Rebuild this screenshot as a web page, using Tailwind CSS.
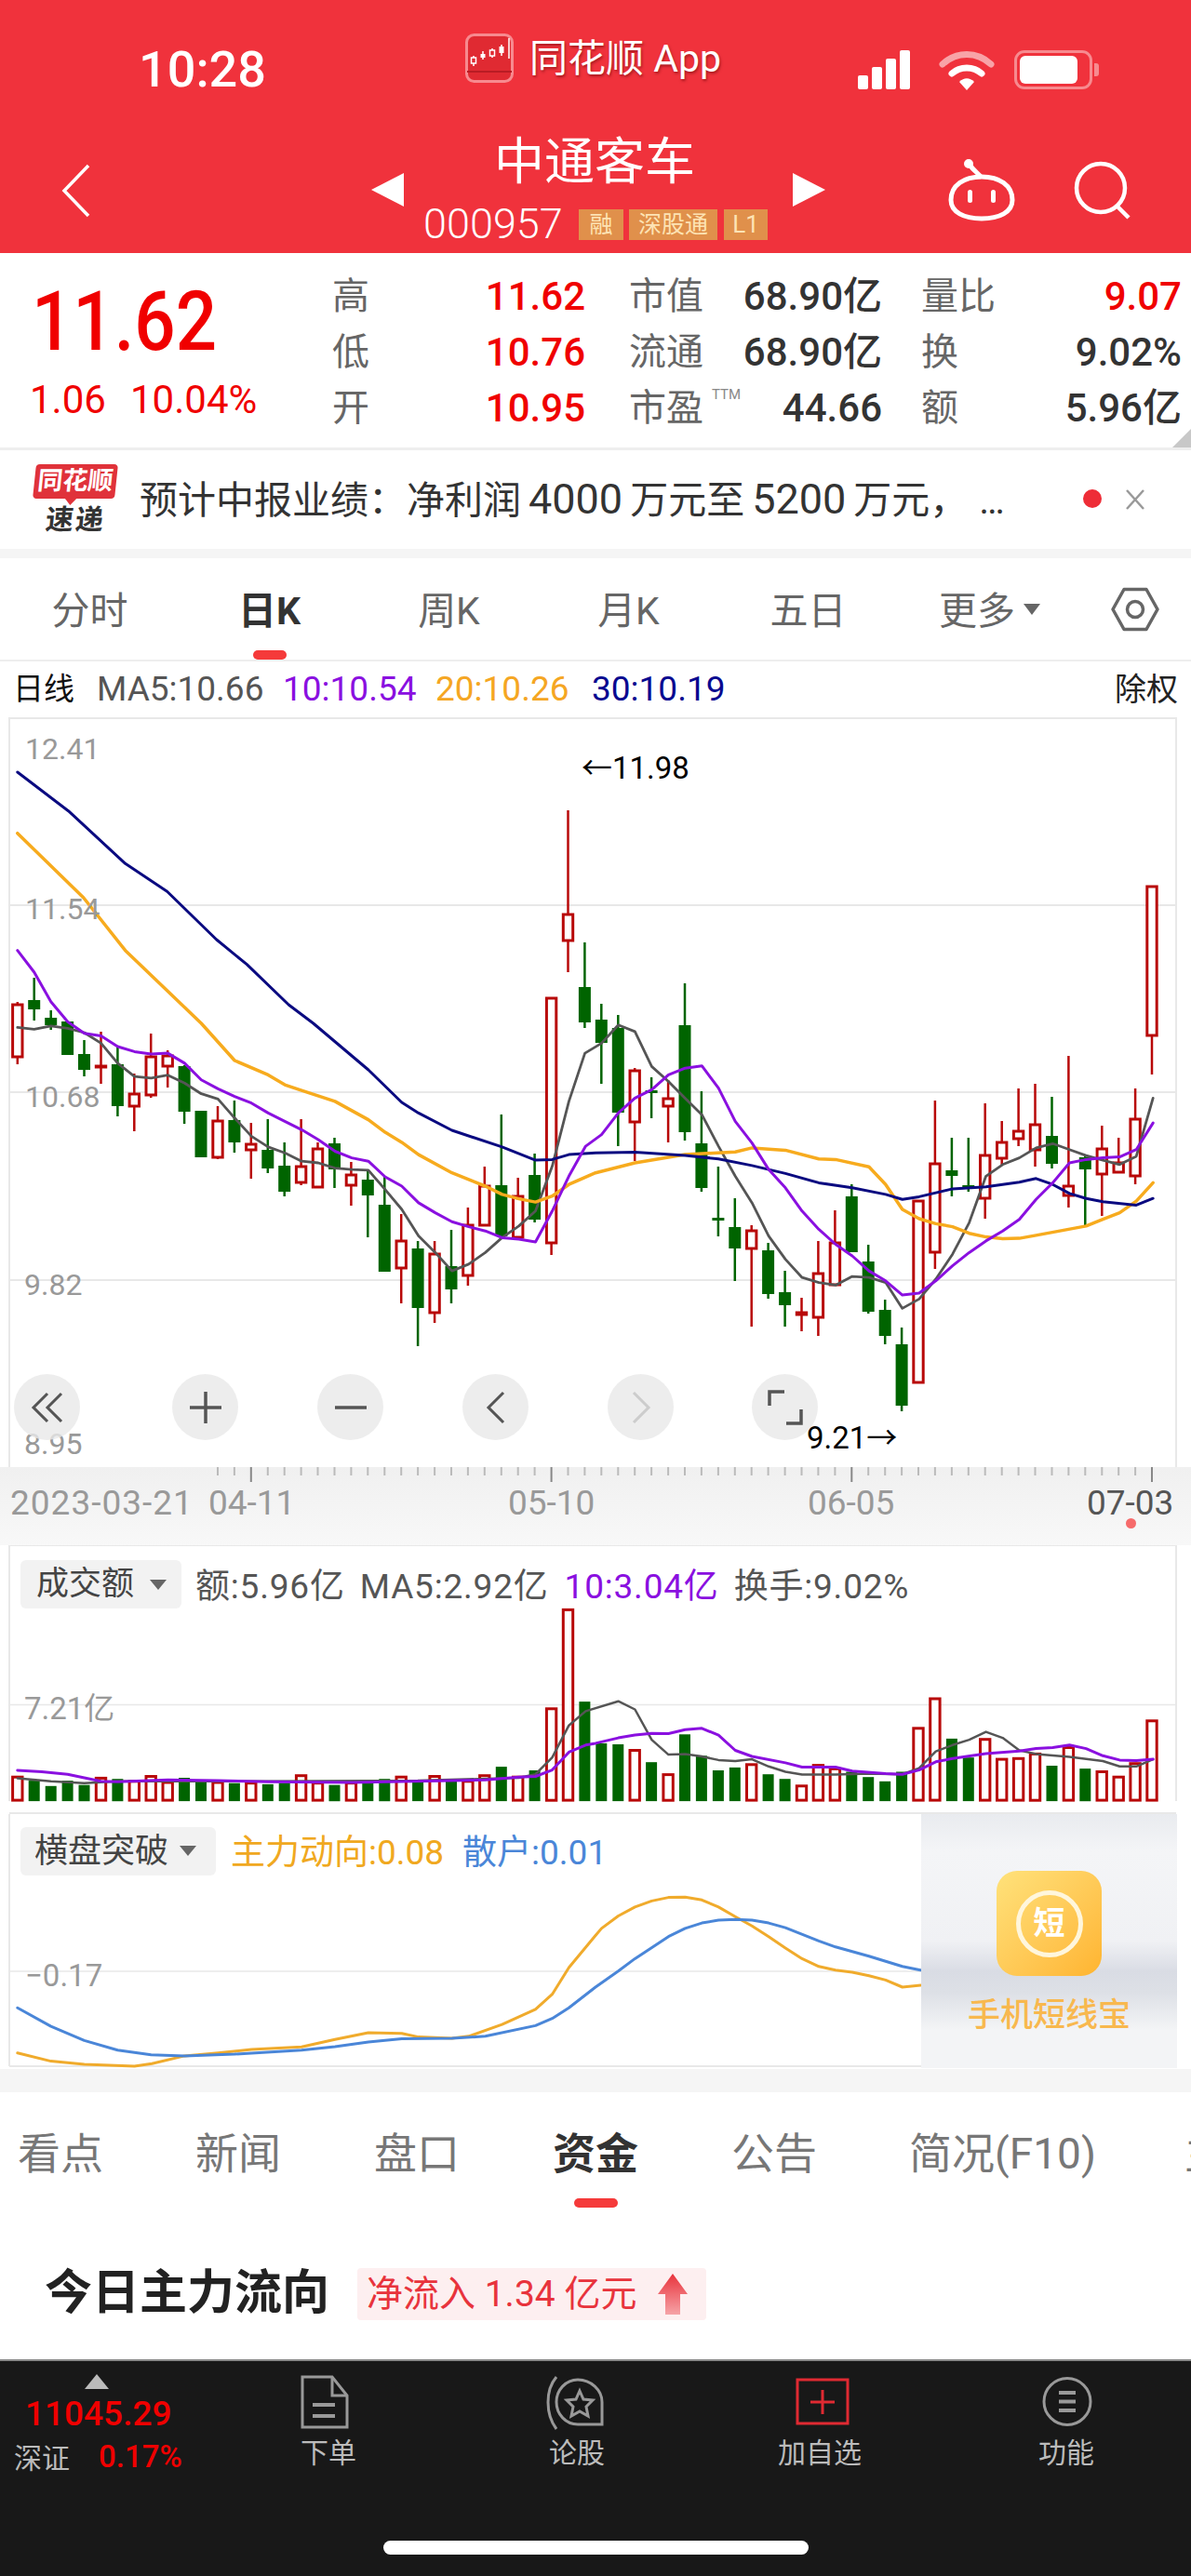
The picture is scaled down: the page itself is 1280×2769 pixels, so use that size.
<!DOCTYPE html>
<html lang="zh-CN">
<head>
    <meta charset="UTF-8">
    <meta name="viewport" content="width=device-width, initial-scale=1.0">
    <title>中通客车 000957</title>
    <script src="https://cdn.jsdelivr.net/npm/@tailwindcss/browser@4"></script>
</head>
<body class="w-[1280px] h-[2769px] overflow-hidden bg-white font-[Roboto,'Noto_Sans_CJK_SC',sans-serif] text-[#333]">
    <!-- Red header -->
    <header class="h-[272px] bg-[#f0323c] text-white relative">
        <div class="h-[130px] flex items-center relative">
            <span class="absolute left-[149px] top-[46px] text-[54px] leading-[58px] font-medium">10:28</span>
            <div class="absolute left-[500px] top-[36px] flex items-center gap-[17px]">
                <svg width="52" height="53" viewBox="0 0 52 53">
                    <rect x="1.5" y="1.5" width="49" height="50" rx="8" fill="#e02a32" stroke="#f78a8f" stroke-width="3"/>
                    <path d="M9 24v11M19 19v9M29 16v10M39 12v12M47 5v22" stroke="#fff" stroke-width="1.5"/>
                    <rect x="6.500" y="26" width="5" height="6" fill="#e02a32" stroke="#fff" stroke-width="1.5"/>
                    <rect x="16.500" y="22" width="5" height="4" fill="#fff"/>
                    <rect x="26.500" y="18" width="5" height="6" fill="#e02a32" stroke="#fff" stroke-width="1.5"/>
                    <rect x="36.500" y="14" width="5" height="7" fill="#fff"/>
                    <rect x="2" y="40" width="48" height="2" fill="#b91c24"/>
                </svg>
                <span class="text-[41px] leading-[50px] [text-shadow:1px_2px_3px_rgba(90,0,0,0.5)]">同花顺 App</span>
            </div>
            <div class="absolute left-[922px] top-[54px] flex items-end gap-[4px] h-[42px]">
                <i class="block w-[11px] h-[15px] rounded-[2px] bg-white"></i>
                <i class="block w-[11px] h-[24px] rounded-[2px] bg-white"></i>
                <i class="block w-[11px] h-[33px] rounded-[2px] bg-white"></i>
                <i class="block w-[11px] h-[42px] rounded-[2px] bg-white"></i>
            </div>
            <svg class="absolute left-[1008px] top-[54px]" width="62" height="44" viewBox="0 0 62 44" fill="none">
                <path d="M5 15C20 1 42 1 57 15" stroke="#f8a3a7" stroke-width="7" stroke-linecap="round"/>
                <path d="M15 25C24 17 38 17 47 25" stroke="#fff" stroke-width="7" stroke-linecap="round"/>
                <path d="M23 34C28 29 34 29 39 34L31 43Z" fill="#fff"/>
            </svg>
            <div class="absolute left-[1090px] top-[54px] flex items-center">
                <div class="w-[84px] h-[42px] rounded-[11px] border-[3px] border-[#f78a8f] p-[3px]">
                    <div class="w-[62px] h-full rounded-[6px] bg-white"></div>
                </div>
                <i class="block w-[5px] h-[14px] rounded-r-[3px] bg-[#f78a8f] ml-[2px]"></i>
            </div>
        </div>
        <div class="flex flex-col items-center">
            <h1 class="text-[54px] leading-[66px] mt-[12px] -ml-[2px]">中通客车</h1>
            <div class="flex items-center mt-[16px] h-[34px]">
                <span class="text-[45px] leading-[34px] font-light w-[167px]">000957</span>
                <span class="w-[48px] h-[33px] bg-[#e0904b] text-[#fde3b4] text-[25px] leading-[33px] text-center">融</span>
                <span class="w-[95px] h-[33px] bg-[#e0904b] text-[#fde3b4] text-[25px] leading-[33px] text-center ml-[6px]">深股通</span>
                <span class="w-[47px] h-[33px] bg-[#e0904b] text-[#fde3b4] text-[26px] leading-[33px] text-center ml-[7px]">L1</span>
            </div>
        </div>
        <svg class="absolute left-[64px] top-[175px]" width="36" height="60" viewBox="0 0 36 60" fill="none">
            <path d="M31 3L5 30L31 57" stroke="#fff" stroke-width="3.500"/>
        </svg>
        <i class="absolute left-[399px] top-[186px] w-0 h-0 border-y-[18px] border-y-transparent border-r-[35px] border-r-white"></i>
        <i class="absolute left-[852px] top-[186px] w-0 h-0 border-y-[18px] border-y-transparent border-l-[35px] border-l-white"></i>
        <svg class="absolute left-[1018px] top-[170px]" width="74" height="68" viewBox="0 0 74 68" fill="none" stroke="#fff" stroke-width="5">
            <path d="M37 21C33 16 28 13 24 7"/>
            <circle cx="23" cy="6" r="2.500" fill="#fff"/>
            <path d="M4 45C4 29 18 20 37 20C56 20 70 29 70 45C70 58 56 65 37 65C18 65 4 58 4 45Z"/>
            <rect x="22" y="34" width="5" height="14" rx="2.500" fill="#fff" stroke="none"/>
            <rect x="47" y="34" width="5" height="14" rx="2.500" fill="#fff" stroke="none"/>
        </svg>
        <svg class="absolute left-[1153px] top-[173px]" width="66" height="64" viewBox="0 0 66 64" fill="none" stroke="#fff" stroke-width="4.500">
            <circle cx="30" cy="29" r="26"/>
            <path d="M47 48L60 61"/>
        </svg>
    </header>

    <!-- Quote -->
    <section class="h-[212px] border-b-[3px] border-[#eeeeee] flex relative">
        <div class="w-[357px] pl-[34px]">
            <div class="text-[78px] leading-[80px] font-medium text-[#f00000] mt-[34px] scale-y-[1.15] origin-center">11.62</div>
            <div class="flex text-[42px] leading-[44px] text-[#f00000] mt-[22px] -ml-[2px]">
                <span class="w-[108px]">1.06</span><span>10.04%</span>
            </div>
        </div>
        <div class="grid grid-cols-[272px_272px_275px] gap-x-[47px] grid-rows-[60px_60px_60px] pt-[17px] text-[40px] leading-[60px] text-[#666] [&>*]:flex [&>*]:justify-between">
            <div><span>高</span><b class="font-medium text-[42px] text-[#f00000]">11.62</b></div>
            <div><span>市值</span><b class="font-medium text-[42px] text-[#333]">68.90亿</b></div>
            <div class="-ml-[5px]"><span>量比</span><b class="font-medium text-[42px] text-[#f00000]">9.07</b></div>
            <div><span>低</span><b class="font-medium text-[42px] text-[#f00000]">10.76</b></div>
            <div><span>流通</span><b class="font-medium text-[42px] text-[#333]">68.90亿</b></div>
            <div class="-ml-[5px]"><span>换</span><b class="font-medium text-[42px] text-[#333]">9.02%</b></div>
            <div><span>开</span><b class="font-medium text-[42px] text-[#f00000]">10.95</b></div>
            <div>
                <span class="flex">市盈<sup class="text-[15px] leading-none mt-[8px] ml-[9px] top-0 text-[#888]">TTM</sup></span>
                <b class="font-medium text-[42px] text-[#333]">44.66</b>
            </div>
            <div class="-ml-[5px]"><span>额</span><b class="font-medium text-[42px] text-[#333]">5.96亿</b></div>
        </div>
        <i class="absolute right-0 bottom-0 w-0 h-0 border-b-[20px] border-b-[#c8c8c8] border-l-[20px] border-l-transparent"></i>
    </section>

    <!-- News ticker -->
    <section class="h-[106px] flex items-center relative">
        <div class="absolute left-[37px] top-[15px] w-[88px]">
            <div class="relative h-[37px] rounded-[4px] bg-[#e0323a] text-white text-[27px] leading-[37px] font-bold -skew-x-6 text-center whitespace-nowrap">同花顺
                <i class="absolute left-[34px] -bottom-[7px] w-0 h-0 border-x-[7px] border-x-transparent border-t-[8px] border-t-[#e0323a]"></i>
            </div>
            <div class="text-[30px] leading-[32px] tracking-[2px] font-bold -skew-x-6 text-[#333] text-center mt-[7px]">速递</div>
        </div>
        <p class="ml-[150px] text-[41px] leading-[50px] text-[#333] whitespace-nowrap">预计中报业绩：净利润<span class="text-[45px] mx-[8px]">4000</span>万元至<span class="text-[45px] mx-[8px]">5200</span>万元，<span class="ml-[12px] tracking-[3px]">…</span></p>
        <i class="absolute left-[1164px] top-[42px] w-[20px] h-[20px] rounded-full bg-[#ee2d37]"></i>
        <svg class="absolute left-[1209px] top-[41px]" width="22" height="24" viewBox="0 0 22 24" fill="none" stroke="#999" stroke-width="2.500">
            <path d="M2 2L20 22M20 2L2 22"/>
        </svg>
    </section>
    <div class="h-[10px] bg-[#f5f5f5]"></div>

    <!-- Period tabs -->
    <nav class="h-[111px] border-b-[2px] border-[#eeeeee] flex items-start text-[41px] leading-[56px] text-[#666] relative">
        <span class="w-[193px] text-center pt-[29px]">分时</span>
        <span class="w-[193px] text-center pt-[29px] font-bold text-[#333]">日K</span>
        <span class="w-[193px] text-center pt-[29px]">周K</span>
        <span class="w-[193px] text-center pt-[29px]">月K</span>
        <span class="w-[193px] text-center pt-[29px]">五日</span>
        <span class="ml-[44px] pt-[29px] flex items-center">更多<i class="block w-0 h-0 ml-[9px] mt-[-4px] border-x-[9px] border-x-transparent border-t-[12px] border-t-[#666]"></i></span>
        <svg class="ml-[75px] mt-[31px]" width="54" height="48" viewBox="0 0 54 48" fill="none" stroke="#666" stroke-width="3.500">
            <path d="M15 2.500H39L51 24L39 45.500H15L3 24Z" stroke-linejoin="round"/>
            <circle cx="27" cy="24" r="8.500"/>
        </svg>
        <i class="absolute left-[272px] top-[99px] w-[36px] h-[10px] rounded-[5px] bg-[#f53a3a]"></i>
    </nav>

    <!-- MA legend -->
    <div class="h-[60px] relative text-[37px] leading-[60px] whitespace-nowrap">
        <span class="absolute left-[14px] text-[33px] text-[#111]">日线</span>
        <span class="absolute left-[104px] text-[#555]">MA5:10.66</span>
        <span class="absolute left-[304px] text-[#8a10e0]">10:10.54</span>
        <span class="absolute left-[468px] text-[#f5a623]">20:10.26</span>
        <span class="absolute left-[636px] text-[#0a0a90]">30:10.19</span>
        <span class="absolute left-[1198px] text-[34px] text-[#222]">除权</span>
    </div>

    <!-- K line chart -->
    <section class="relative h-[806px]">
        <svg id="kline" class="block" width="1280" height="806" viewBox="0 771 1280 806"></svg>
        <span class="absolute left-[27px] top-[16px] text-[32px] leading-[36px] text-[#999]">12.41</span>
        <span class="absolute left-[27px] top-[188px] text-[32px] leading-[36px] text-[#999]">11.54</span>
        <span class="absolute left-[27px] top-[390px] text-[32px] leading-[36px] text-[#999]">10.68</span>
        <span class="absolute left-[26px] top-[592px] text-[32px] leading-[36px] text-[#999]">9.82</span>
        <span class="absolute left-[26px] top-[763px] text-[32px] leading-[36px] text-[#999]">8.95</span>
        <span class="absolute left-[625px] top-[37px] text-[33px] leading-[36px] text-black">←11.98</span>
        <span class="absolute left-[867px] top-[757px] text-[33px] leading-[36px] text-black">9.21→</span>
        <div class="absolute left-[15px] top-[706px] w-[71px] h-[71px] rounded-full bg-[#e8e8e8]/80 flex items-center justify-center">
            <svg width="36" height="36" viewBox="0 0 36 36" fill="none" stroke="#555" stroke-width="3"><path d="M18 3L3 18L18 33M33 3L18 18L33 33"/></svg>
        </div>
        <div class="absolute left-[185px] top-[706px] w-[71px] h-[71px] rounded-full bg-[#e8e8e8]/80 flex items-center justify-center">
            <svg width="34" height="34" viewBox="0 0 34 34" fill="none" stroke="#555" stroke-width="3.500"><path d="M0 17H34M17 0V34"/></svg>
        </div>
        <div class="absolute left-[341px] top-[706px] w-[71px] h-[71px] rounded-full bg-[#e8e8e8]/80 flex items-center justify-center">
            <svg width="34" height="34" viewBox="0 0 34 34" fill="none" stroke="#555" stroke-width="3.500"><path d="M0 17H34"/></svg>
        </div>
        <div class="absolute left-[497px] top-[706px] w-[71px] h-[71px] rounded-full bg-[#e8e8e8]/80 flex items-center justify-center">
            <svg width="24" height="36" viewBox="0 0 24 36" fill="none" stroke="#555" stroke-width="3"><path d="M20 2L4 18L20 34"/></svg>
        </div>
        <div class="absolute left-[653px] top-[706px] w-[71px] h-[71px] rounded-full bg-[#e8e8e8]/80 flex items-center justify-center">
            <svg width="24" height="36" viewBox="0 0 24 36" fill="none" stroke="#cccccc" stroke-width="3"><path d="M4 2L20 18L4 34"/></svg>
        </div>
        <div class="absolute left-[808px] top-[706px] w-[71px] h-[71px] rounded-full bg-[#e8e8e8]/80 flex items-center justify-center">
            <svg width="38" height="38" viewBox="0 0 38 38" fill="none" stroke="#555" stroke-width="3.500"><path d="M2 17V2H18M36 21V36H20"/></svg>
        </div>
    </section>

    <!-- Date axis -->
    <section class="relative h-[84px] bg-gradient-to-b from-[#f0f0f0] to-[#f8f8f8] text-[37px] leading-[40px] text-[#999]">
        <svg id="ticks" class="absolute left-0 top-0" width="1280" height="16" viewBox="0 1577 1280 16"></svg>
        <span class="absolute left-[11px] top-[19px] tracking-[1px]">2023-03-21</span>
        <span class="absolute left-[224px] top-[19px]">04-11</span>
        <span class="absolute left-[546px] top-[19px]">05-10</span>
        <span class="absolute left-[868px] top-[19px]">06-05</span>
        <span class="absolute left-[1168px] top-[19px] text-[#555]">07-03</span>
        <i class="absolute left-[1210px] top-[55px] w-[11px] h-[11px] rounded-full bg-[#f66b6b]"></i>
    </section>

    <!-- Turnover panel -->
    <section class="relative h-[289px]">
        <svg id="volume" class="block" width="1280" height="289" viewBox="0 1661 1280 289"></svg>
        <div class="absolute left-[22px] top-[13px] flex items-center">
            <div class="w-[173px] h-[52px] rounded-[6px] bg-[#f2f2f2] flex items-center pl-[17px] text-[35px] leading-[52px] text-[#444]">
                成交额<i class="block w-0 h-0 ml-[17px] border-x-[9px] border-x-transparent border-t-[11px] border-t-[#666]"></i>
            </div>
            <div class="flex text-[37px] tracking-[0.8px] leading-[52px] text-[#555] whitespace-nowrap ml-[15px] mt-[6px]">
                <span>额:5.96亿</span>
                <span class="ml-[16px]">MA5:2.92亿</span>
                <span class="ml-[17px] text-[#8a10e0]">10:3.04亿</span>
                <span class="ml-[16px]">换手:9.02%</span>
            </div>
        </div>
        <span class="absolute left-[26px] top-[158px] text-[33px] leading-[36px] text-[#999]">7.21亿</span>
    </section>

    <!-- Indicator panel -->
    <section class="relative h-[274px]">
        <svg id="osc" class="block" width="1280" height="274" viewBox="0 1950 1280 274"></svg>
        <div class="absolute left-[22px] top-[11px] flex items-center">
            <div class="w-[210px] h-[52px] rounded-[6px] bg-[#f2f2f2] flex items-center pl-[15px] text-[36px] leading-[52px] text-[#444]">
                横盘突破<i class="block w-0 h-0 ml-[12px] border-x-[9px] border-x-transparent border-t-[11px] border-t-[#666]"></i>
            </div>
            <div class="flex text-[37px] leading-[52px] whitespace-nowrap ml-[16px] mt-[5px]">
                <span class="text-[#f0a820]">主力动向:0.08</span>
                <span class="ml-[20px] text-[#4a86d8]">散户:0.01</span>
            </div>
        </div>
        <span class="absolute left-[27px] top-[156px] text-[33px] leading-[36px] text-[#999]">−0.17</span>
        <!-- floating ad -->
        <div class="absolute left-[990px] top-0 w-[275px] h-[273px] bg-[linear-gradient(180deg,#e9ebef_0%,#f4f5f7_15%,#f0f1f4_50%,#d9dce4_62%,#dde0e6_70%,#f3f4f6_85%,#f3f4f6_100%)] flex flex-col items-center pt-[61px]">
            <div class="w-[113px] h-[113px] rounded-[22px] bg-gradient-to-br from-[#ffe27a] to-[#ffb42e] flex items-center justify-center">
                <div class="w-[72px] h-[72px] rounded-full border-[5px] border-[#fff6dc] text-white text-[34px] leading-[60px] font-bold text-center">短</div>
            </div>
            <span class="text-[35px] leading-[44px] font-medium text-[#f8b84e] mt-[21px]">手机短线宝</span>
        </div>
    </section>
    <div class="h-[25px] bg-[#f5f5f5]"></div>

    <!-- Detail tabs -->
    <nav class="h-[99px] relative text-[46px] leading-[60px] text-[#777] whitespace-nowrap">
        <span class="absolute left-[19px] top-[36px]">看点</span>
        <span class="absolute left-[210px] top-[36px]">新闻</span>
        <span class="absolute left-[402px] top-[36px]">盘口</span>
        <span class="absolute left-[594px] top-[36px] font-bold text-[#333]">资金</span>
        <span class="absolute left-[786px] top-[36px]">公告</span>
        <span class="absolute left-[977px] top-[36px]">简况(F10)</span>
        <span class="absolute left-[1273px] top-[36px]">主</span>
        <i class="absolute left-[617px] top-[114px] w-[47px] h-[10px] rounded-[5px] bg-[#f53a3a]"></i>
    </nav>

    <!-- Main fund flow -->
    <section class="h-[188px] flex items-start pl-[48px] pt-[85px]">
        <h2 class="text-[51px] leading-[64px] font-bold text-[#222]">今日主力流向</h2>
        <div class="ml-[30px] mt-[5px] w-[375px] h-[56px] rounded-[4px] bg-[#fdeff0] flex items-center pl-[10px] text-[39px] leading-[56px] text-[#e8333c]">
            净流入 1.34 亿元
            <svg class="ml-[22px]" width="34" height="44" viewBox="0 0 34 44">
                <defs><linearGradient id="up" x1="0" y1="0" x2="0" y2="1"><stop offset="0" stop-color="#e8333c"/><stop offset="1" stop-color="#f6a3a7"/></linearGradient></defs>
                <path d="M17 0L33 22H25V44H9V22H1Z" fill="url(#up)"/>
            </svg>
        </div>
    </section>

    <!-- Bottom bar -->
    <footer class="h-[234px] bg-[#181818] border-t-[2px] border-[#8a8a8a] relative text-[#bbb] text-[30px] leading-[40px] whitespace-nowrap">
        <i class="absolute left-[91px] top-[14px] w-0 h-0 border-x-[13px] border-x-transparent border-b-[16px] border-b-[#bbb]"></i>
        <span class="absolute left-[27px] top-[34px] text-[37px] leading-[46px] font-medium text-[#f00000]">11045.29</span>
        <span class="absolute left-[15px] top-[85px]">深证</span>
        <span class="absolute left-[106px] top-[83px] text-[33px] font-medium text-[#f00000]">0.17%</span>

        <svg class="absolute left-[323px] top-[15px]" width="52" height="58" viewBox="0 0 52 58" fill="none" stroke="#999" stroke-width="3">
            <path d="M2 2H34L50 22V56H2Z"/><path d="M34 2V22H50"/><path d="M13 32H37M13 44H37" stroke-width="4"/>
        </svg>
        <span class="absolute left-[323px] top-[79px]">下单</span>

        <svg class="absolute left-[587px] top-[15px]" width="62" height="60" viewBox="0 0 62 60" fill="none" stroke="#999" stroke-width="3">
            <path d="M11 2C-1 16 -1 42 11 58"/>
            <path d="M60 53H34C21 53 11 42 11 29C11 16 21 5 34 5C48 5 60 16 60 29Z"/>
            <path d="M36 17L40 26L50 27L43 34L45 44L36 39L27 44L29 34L22 27L32 26Z"/>
        </svg>
        <span class="absolute left-[590px] top-[79px]">论股</span>

        <svg class="absolute left-[855px] top-[17px]" width="58" height="53" viewBox="0 0 58 53" fill="none" stroke="#e02a32" stroke-width="3">
            <rect x="2" y="3" width="54" height="47"/><path d="M29 14V40M16 27H42"/>
        </svg>
        <span class="absolute left-[836px] top-[79px]">加自选</span>

        <svg class="absolute left-[1120px] top-[16px]" width="54" height="55" viewBox="0 0 54 55" fill="none" stroke="#999" stroke-width="3">
            <circle cx="27" cy="27.500" r="25"/><path d="M18 18H36M18 27.500H36M18 37H36" stroke-width="4"/>
        </svg>
        <span class="absolute left-[1116px] top-[79px]">功能</span>

        <i class="absolute left-[412px] top-[193px] w-[457px] h-[15px] rounded-[8px] bg-white"></i>
    </footer>

    <script>
        const RED = '#b80808', GREEN = '#006400';
        const candleX = i => 18.8 + 17.93 * i;

        // type, wick top, body top, body bottom, wick bottom
        const candles = [
            ['r',1077,1080,1136,1144],['g',1051,1075,1085,1097],['g',1086,1094,1102,1107],['g',1098,1098,1134,1134],
            ['g',1118,1133,1150,1157],['r',1109,1146,1147,1165],['g',1125,1144,1189,1200],['r',1154,1176,1189,1216],
            ['r',1111,1136,1177,1180],['r',1129,1135,1146,1169],['g',1145,1146,1195,1208],['g',1194,1194,1244,1244],
            ['r',1189,1205,1244,1246],['g',1183,1204,1228,1239],['r',1207,1230,1236,1267],['g',1203,1236,1256,1261],
            ['g',1228,1253,1281,1286],['r',1203,1254,1271,1274],['r',1228,1235,1276,1276],['g',1223,1229,1257,1277],
            ['r',1249,1263,1274,1296],['g',1257,1268,1285,1330],['g',1264,1295,1367,1367],['r',1305,1334,1363,1401],
            ['g',1334,1342,1406,1447],['r',1334,1348,1411,1422],['g',1322,1361,1386,1401],['r',1298,1317,1371,1382],
            ['r',1254,1275,1317,1317],['g',1198,1274,1329,1330],['r',1266,1286,1330,1330],['g',1240,1263,1311,1314],
            ['r',1073,1073,1336,1349],['r',871,983,1011,1045],['g',1013,1061,1099,1105],['g',1079,1096,1121,1165],
            ['g',1091,1105,1196,1232],['r',1148,1151,1206,1248],['g',1158,1172,1174,1202],['r',1161,1181,1189,1228],
            ['g',1057,1102,1217,1226],['g',1173,1229,1277,1281],['g',1254,1309,1311,1329],['g',1288,1319,1342,1377],
            ['r',1317,1323,1342,1426],['g',1336,1344,1391,1396],['g',1366,1389,1403,1426],['r',1395,1411,1413,1431],
            ['r',1334,1369,1416,1436],['r',1301,1336,1381,1381],['g',1273,1286,1346,1346],['g',1338,1356,1410,1412],
            ['g',1397,1408,1436,1445],['g',1427,1445,1511,1517],['r',1291,1291,1486,1486],['r',1183,1251,1346,1364],
            ['g',1223,1258,1264,1286],['g',1223,1274,1278,1281],['r',1186,1242,1288,1310],['r',1205,1228,1245,1252],
            ['r',1170,1216,1224,1232],['r',1165,1209,1236,1254],['g',1179,1221,1251,1256],['r',1135,1275,1285,1298],
            ['g',1243,1244,1257,1318],['r',1210,1235,1262,1307],['r',1223,1250,1260,1260],['r',1170,1203,1264,1273],
            ['r',953,953,1113,1155]
        ];

        // top of each turnover bar, in crop units
        const volumes = [680,690,705,690,702,683,685,692,678,695,682,690,695,697,697,700,697,676,697,702,697,690,685,680,690,678,690,692,676,651,680,661,488,210,468,585,588,605,638,673,560,620,661,653,645,672,685,705,647,657,665,680,692,665,543,460,572,625,574,630,628,615,648,597,656,665,680,642,522];

        // lines were read off crops of the chart, so map them back to page pixels
        const left = (x, y, base, sy) => [x / 2.45, base + y / sy];
        const right = (x, y, base, sy) => [640 + x / 2.45, base + y / sy];
        const pts = (list, fn, base, sy) => list.map(p => fn(p[0], p[1], base, sy).map(n => n.toFixed(1)).join(',')).join(' ');
        const line = (points, color, w) => `<polyline points="${points}" fill="none" stroke="${color}" stroke-width="${w}" stroke-linejoin="round" stroke-linecap="round"/>`;
        const rule = (x1, y1, x2, y2, c, w) => `<line x1="${x1}" y1="${y1}" x2="${x2}" y2="${y2}" stroke="${c}" stroke-width="${w}"/>`;

        const grey = pts([[46,12],[90,18],[134,8],[178,15],[222,28],[266,60],[310,120],[354,160],[398,165],[442,156],[486,180],[530,212],[574,228],[618,285],[662,340],[706,372],[750,390],[794,415],[838,420],[882,436],[926,440],[970,442],[1014,500],[1058,560],[1102,640],[1146,690],[1190,745],[1234,725],[1278,690],[1322,645],[1366,610],[1410,565],[1454,430],[1498,235],[1540,90]], left, 1100, 2.8)
            + ' ' + pts([[16,60],[60,5],[104,25],[148,130],[192,175],[236,225],[280,275],[324,370],[368,460],[412,540],[456,640],[500,710],[544,765],[588,780],[632,788],[676,762],[720,765],[764,780],[808,858],[852,830],[896,770],[940,695],[984,600],[1028,460],[1072,425],[1116,405],[1160,375],[1204,362],[1248,380],[1292,398],[1336,412],[1380,425],[1424,400],[1468,225]], right, 1100, 2.8);
        const purple = pts([[46,1265],[90,1335],[134,1430],[178,1495]], left, 600, 3)
            + ' ' + pts([[222,30],[266,38],[310,70],[354,85],[398,92],[442,90],[486,120],[530,170],[574,197],[618,220],[662,240],[706,270],[750,295],[794,320],[838,350],[882,385],[926,405],[970,415],[1014,462],[1058,490],[1102,540],[1146,570],[1190,597],[1234,612],[1278,625],[1322,645],[1366,650],[1410,658],[1454,565],[1498,460],[1542,370]], left, 1100, 2.8)
            + ' ' + pts([[16,335],[60,270],[104,225],[148,200],[192,155],[236,135],[280,128],[324,195],[368,295],[412,360],[456,440],[500,495],[544,565],[588,620],[632,665],[676,700],[720,745],[764,775],[808,818],[852,812],[896,775],[940,730],[984,690],[1028,655],[1072,625],[1116,590],[1160,530],[1204,480],[1248,420],[1292,410],[1336,405],[1380,402],[1424,380],[1468,300]], right, 1100, 2.8);
        const orange = pts([[46,887],[220,1095],[330,1265],[530,1500]], left, 600, 3)
            + ' ' + pts([[618,112],[706,155],[750,185],[794,202],[882,235],[970,290],[1014,328],[1058,358],[1102,395],[1190,450],[1278,490],[1322,515],[1366,528],[1410,538],[1454,520],[1498,485],[1568,450]], left, 1100, 2.8)
            + ' ' + pts([[104,420],[236,395],[368,387],[412,375],[500,382],[588,408],[632,410],[720,432],[764,485],[808,560],[852,588],[896,603],[940,612],[984,632],[1028,643],[1072,648],[1116,647],[1160,638],[1292,610],[1336,590],[1380,570],[1424,535],[1468,480]], right, 1100, 2.8);
        const navy = pts([[46,690],[180,815],[330,985],[440,1075],[570,1230],[650,1310],[760,1440],[825,1500]], left, 600, 3)
            + ' ' + pts([[970,140],[1058,238],[1102,270],[1190,322],[1322,372],[1410,412],[1454,410],[1498,395],[1568,390]], left, 1100, 2.8)
            + ' ' + pts([[104,388],[236,398],[324,408],[412,428],[500,452],[588,480],[676,495],[764,515],[808,530],[852,522],[940,498],[1028,492],[1116,478],[1160,467],[1204,485],[1248,512],[1292,527],[1336,537],[1424,547],[1468,527]], right, 1100, 2.8);

        let k = rule(10, 772, 1264, 772, '#e8e8e8', 2) + rule(10, 771, 10, 1577, '#e8e8e8', 2) + rule(1264, 771, 1264, 1577, '#e8e8e8', 2);
        [973, 1174, 1376].forEach(y => { k += rule(10, y, 1264, y, '#e8e8e8', 2); });
        candles.forEach((c, i) => {
            const x = candleX(i).toFixed(1);
            if (c[0] === 'r') {
                k += rule(x, c[1], x, c[2], RED, 2.5) + rule(x, c[3], x, c[4], RED, 2.5);
                k += `<rect x="${x - 5.2}" y="${c[2]}" width="10.4" height="${Math.max(c[3] - c[2], 1)}" fill="#fff" stroke="${RED}" stroke-width="3"/>`;
            } else {
                k += rule(x, c[1], x, c[4], GREEN, 2.5);
                k += `<rect x="${x - 6.5}" y="${c[2]}" width="13" height="${Math.max(c[3] - c[2], 3)}" fill="${GREEN}"/>`;
            }
        });
        k += line(grey, '#555', 2.8) + line(orange, '#f7ab1e', 3.5) + line(navy, '#0a0a80', 3) + line(purple, '#8a10e0', 3);
        document.getElementById('kline').innerHTML = k;

        let t = '';
        candles.forEach((c, i) => {
            if (i < 12) return;
            const major = [14, 32, 50, 68].includes(i);
            t += rule(candleX(i).toFixed(1), 1577, candleX(i).toFixed(1), major ? 1593 : 1586, major ? '#888' : '#bbb', 2);
        });
        document.getElementById('ticks').innerHTML = t;

        let v = rule(1264, 1661, 1264, 1936, '#e8e8e8', 2) + rule(10, 1661, 1264, 1661, '#e8e8e8', 2) + rule(10, 1661, 10, 1936, '#e8e8e8', 2);
        v += rule(10, 1832.5, 1264, 1832.5, '#e8e8e8', 1.5) + rule(10, 1949, 1264, 1949, '#e8e8e8', 2);
        const baseY = 1650 + 745 / 2.613;
        volumes.forEach((top, i) => {
            const x = candleX(i), y = 1650 + top / 2.613;
            if (candles[i][0] === 'r') {
                v += `<rect x="${(x - 5.2).toFixed(1)}" y="${y.toFixed(1)}" width="10.4" height="${(baseY - y).toFixed(1)}" fill="#fff" stroke="${RED}" stroke-width="3"/>`;
            } else {
                v += `<rect x="${(x - 6).toFixed(1)}" y="${y.toFixed(1)}" width="12" height="${(baseY - y + 1).toFixed(1)}" fill="${GREEN}"/>`;
            }
        });
        v += line(pts([[46,683],[134,692],[222,697],[310,692],[700,692],[1100,690],[1366,682],[1410,672],[1454,625],[1498,535],[1542,495]], left, 1650, 2.613)
            + ' ' + pts([[60,467],[104,490],[148,575],[192,617],[236,615],[280,622],[324,632],[368,635],[412,630],[456,650],[500,665],[544,673],[632,673],[720,670],[808,672],[852,655],[896,608],[940,590],[984,575],[1028,553],[1072,570],[1116,605],[1160,615],[1248,623],[1336,635],[1380,650],[1424,650],[1468,630]], right, 1650, 2.613), '#555', 2.5);
        v += line(pts([[46,661],[110,665],[178,672],[222,682],[266,692],[310,693],[442,688],[574,690],[706,693],[926,695],[1190,690],[1278,688],[1366,680],[1410,678],[1454,660],[1498,610],[1542,590]], left, 1650, 2.613)
            + ' ' + pts([[0,585],[60,570],[104,562],[148,557],[192,558],[236,547],[280,543],[324,562],[368,605],[412,622],[500,640],[544,652],[632,652],[676,663],[764,670],[808,672],[852,660],[896,637],[940,628],[1028,614],[1116,607],[1160,600],[1204,597],[1248,590],[1292,600],[1336,620],[1380,632],[1424,634],[1468,630]], right, 1650, 2.613), '#8a10e0', 3);
        document.getElementById('volume').innerHTML = v;

        let o = rule(10, 1950, 10, 2221, '#e8e8e8', 2) + rule(10, 2221, 1264, 2221, '#e8e8e8', 2) + rule(10, 2119, 1264, 2119, '#e8e8e8', 1.5);
        o += line(pts([[46,1455],[134,1478],[222,1487],[354,1492],[400,1485],[486,1463],[574,1455],[662,1445],[794,1438],[882,1417],[970,1398],[1058,1400],[1102,1410],[1190,1414],[1234,1408],[1322,1375],[1410,1332],[1454,1290],[1498,1215],[1568,1125]], left, 1650, 2.613)
            + ' ' + pts([[16,1105],[60,1070],[104,1045],[148,1028],[192,1018],[236,1017],[280,1025],[324,1045],[368,1072],[412,1098],[456,1128],[500,1160],[544,1190],[588,1212],[632,1222],[676,1228],[720,1238],[764,1250],[808,1270],[856,1265]], right, 1650, 2.613), '#f0ab2c', 3);
        o += line(pts([[46,1328],[134,1380],[222,1420],[310,1447],[398,1460],[486,1463],[618,1458],[794,1447],[882,1437],[970,1424],[1058,1415],[1190,1414],[1278,1408],[1410,1378],[1454,1358],[1498,1328],[1568,1270]], left, 1650, 2.613)
            + ' ' + pts([[60,1225],[104,1190],[192,1128],[236,1105],[280,1090],[324,1082],[368,1080],[412,1082],[456,1090],[500,1103],[588,1140],[632,1157],[720,1183],[808,1212],[856,1222]], right, 1650, 2.613), '#4a86d8', 3);
        document.getElementById('osc').innerHTML = o;
    </script>
</body>
</html>
